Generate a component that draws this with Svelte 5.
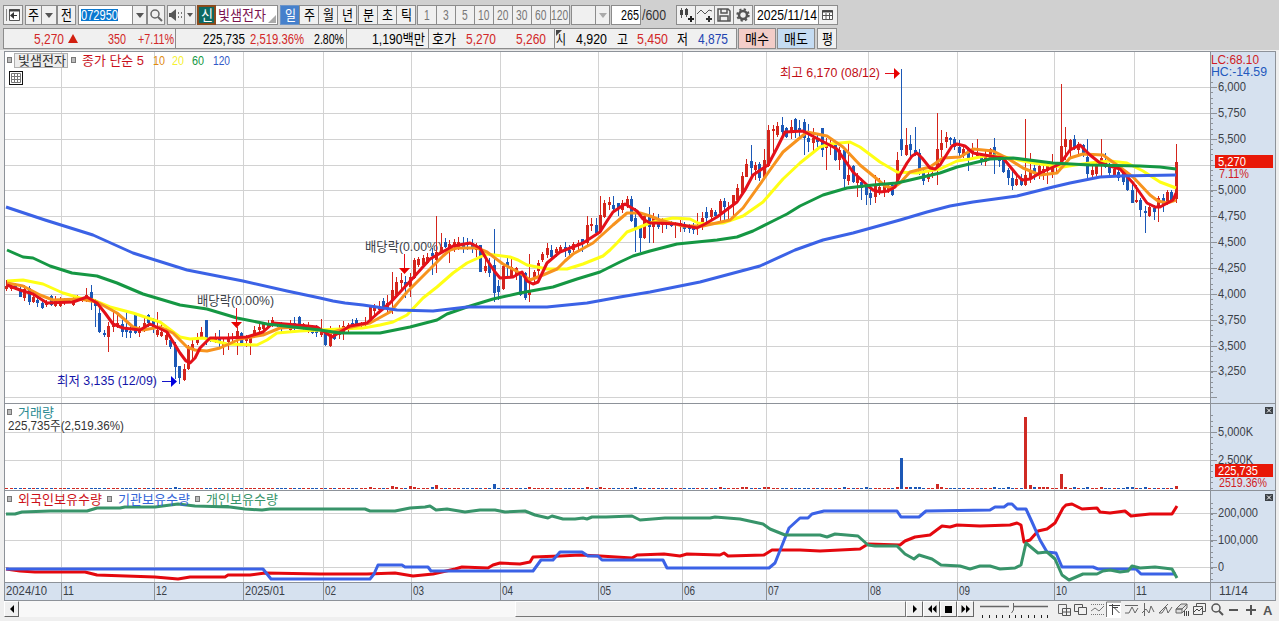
<!--
  App.svelte - Daily stock chart window
  Quote toolbar, candle chart with moving averages, volume and holdings panes
-->
<script>
  const STEP = 4.43
  const FIRST_X = 6.4

  // Candle runs: colour, high, body top, body bottom, low (1/3 px below base)
  const runs = [
    {
      base: 220,
      rows: `r180,198,208,212 r190,198,208,214 b190,192,208,210 b200,208,230,230 r195,208,235,242 b197,205,245,255
        r222,232,245,250 b232,240,250,262 b240,248,265,267 r240,250,256,262 b225,228,255,258 r228,238,258,260
        r232,240,258,262 r235,238,248,255 b236,240,245,250 r228,235,255,258 r225,232,240,243 r230,236,242,245
        r205,225,230,245 b195,216,245,270 b238,245,258,320 b265,280,335,340 b330,338,345,350 r305,318,352,395
        r275,312,320,335 r280,310,320,325 b300,312,335,350 b275,325,335,355 b315,332,340,355 b285,286,340,342
        r318,325,340,352 r290,308,320,335 b282,285,310,320 b295,302,322,340 r275,330,345,350 r310,335,348,350
        r325,345,360,375 b350,360,380,388 b365,375,440,478 b438,438,475,492 r433,448,480,482 r375,380,448,450
        r360,372,390,425 r340,350,370,375 r320,335,350,355 b300,300,358,375 b350,355,360,365 r340,355,362,368
        b330,355,370,385 r355,365,378,405 r340,355,365,390 r340,350,358,370 r320,332,350,405 b335,340,370,378
        r345,355,362,380 r345,345,368,405 r318,330,342,350 r312,320,330,340 r305,310,328,330 r300,308,320,322
        r290,300,310,320 b305,308,318,322 b305,310,322,335 b308,315,325,328 r300,312,330,335 b290,310,325,330
        b288,290,325,328 r308,312,325,330 r305,315,330,340 b315,320,340,342 b315,328,340,350 r298,330,345,350
        b330,335,375,378 r318,340,378,380`
    },
    {
      base: 180,
      rows: `b452,460,478,480 r435,445,465,478 r422,438,458,480 r430,435,450,455 b418,428,438,442 b415,420,435,438
        r425,430,436,442 r410,428,436,438 r375,378,425,428 r373,380,392,410 r363,378,390,395 b355,362,380,390
        r345,370,388,403 r275,330,362,403 r290,305,345,350 r280,300,310,330 b288,305,318,355 r280,290,320,350
        r235,240,295,298 r230,238,255,262 r225,235,255,258 r220,232,248,252 b205,220,228,285 r108,215,240,280
        r160,200,215,220 b175,187,200,205 r180,192,208,248 r178,185,200,215 r170,185,205,210 b172,188,205,218
        b175,188,196,210 b178,190,205,220 r188,200,210,230 b195,195,275,275 r225,258,272,278 b235,248,278,290
        b148,255,340,365 b300,318,335,360 r250,258,328,330 b235,245,260,290 r230,262,290,295 r260,265,285,300
        b275,278,345,348 b275,280,355,360 r222,330,345,365 r270,275,292,310 r240,250,272,300 r215,222,240,245
        r188,205,225,235 b195,210,232,235 r200,208,220,230 r195,200,212,215 b185,200,212,230 b195,210,220,235
        r185,193,210,215 r180,190,198,210 b178,178,190,215 r108,135,190,195 r115,132,138,152 b115,135,158,165
        r48,105,155,158 r60,70,110,115 r52,65,75,90 b48,75,88,95 b68,70,85,108 r60,68,90,98
        r48,58,78,85 b48,58,122,125 b85,115,145,215 b140,145,175,215 r105,108,175,178`
    },
    {
      base: 60,
      rows: `b440,465,500,550 r458,470,500,550 b462,478,500,508 r475,488,495,520 b480,488,495,508 b482,485,498,500
        r485,490,496,533 r480,490,498,515 b485,492,508,515 b492,500,508,518 b490,500,510,522 r460,495,503,525
        r455,475,500,510 b442,455,475,488 r445,450,472,478 b450,455,468,478 r418,422,458,492 b415,422,440,492
        r425,440,448,480 r405,405,432,465 r372,385,420,425 r335,348,400,405 r298,312,350,352 b255,303,325,360
        r305,315,330,360 b305,312,355,362 r268,300,355,360 r195,210,318,320 r195,207,212,282 r185,197,225,230
        b170,195,215,225 b200,203,230,235 r180,200,212,238 b175,177,215,235 b180,205,215,235 b178,185,233,285
        b192,235,245,275 r205,235,250,278 b225,238,245,262 b205,205,270,290 r235,255,265,330 r230,250,258,285
        b245,255,300,302 r262,270,300,330 b262,270,358,390 r250,345,362,375 b315,318,365,368 r340,352,370,412
        b355,365,385,420 b375,382,405,435 b385,400,415,435 r345,375,412,428 r355,380,395,405 r360,370,395,410
        r372,380,392,398 b372,375,405,408 r275,300,365,375 b28,237,270,288 r205,255,285,288 b225,252,270,290
        b200,270,280,288 b268,280,335,345 b325,333,362,375 r335,342,358,365 r325,338,348,355 r158,268,330,375
        r210,250,270,290 r215,230,245,265 b230,235,240,255 b232,238,262,270`
    },
    {
      base: 50,
      rows: `b270,290,310,320 r290,298,318,325 b290,300,325,362 r280,298,310,330 r268,310,318,325 b310,315,335,345
        r300,318,335,348 r295,298,325,330 b265,290,318,372 b310,315,332,350 b315,330,365,370 b355,360,385,405
        b360,383,408,420 r370,388,405,408 b372,385,405,408 r208,375,405,408 r308,365,385,400 b345,355,370,390
        r338,348,372,388 r345,358,368,390 r340,345,362,402 r312,345,365,385 r335,342,350,370 r102,288,335,345
        r232,268,290,330 r268,270,300,325 b255,268,295,300 r275,282,300,318 b282,285,310,320 b268,320,372,385
        r345,360,375,388 r340,348,372,378 r268,325,345,382 b310,335,350,355 b340,350,368,378 r348,358,375,378
        b355,365,385,392 b365,370,395,405 b370,380,420,422 b400,420,458,460 r405,450,456,460 b445,450,480,500
        b468,482,488,548 r460,470,498,500 b465,475,485,510 r438,445,472,515 b432,445,465,485 r420,425,460,465
        b420,425,450,455 r282,335,448,460`
    }
  ]

  const candles = runs
    .flatMap(({ base, rows }) =>
      rows.trim().split(/\s+/).map((row) => {
        const [high, top, bottom, low] = row.slice(1).split(',').map((n) => Math.round(base + n / 3))
        return { up: row[0] === 'r', high, top, bottom, low }
      })
    )
    .map((c, i) => ({ ...c, x: Math.round(FIRST_X + i * STEP) }))

  const averages = [
    { color: '#ffff14', points: '7,281 23,280 43,284 63,293 80,298 93,300 110,307 133,313 160,322 180,337 190,339 203,338 227,344 257,345 267,340 277,333 300,331 320,330 340,329 363,328 380,325 393,322 407,315 423,298 437,287 453,273 467,263 487,254 510,257 518,260 527,265 547,269 567,269 583,264 603,256 610,250 617,243 627,232 640,227 650,223 657,221 673,218 690,219 698,223 707,224 723,223 743,216 763,202 783,179 800,163 810,155 820,147 830,144 850,142 860,147 880,162 897,172 917,173 940,169 957,161 970,159 985,156 1000,156 1033,163 1063,167 1075,165 1090,163 1110,161 1127,163 1143,171 1160,182 1176,188' },
    { color: '#f7931e', points: '7,283 23,286 40,295 53,300 80,299 97,302 117,313 133,327 143,330 160,327 173,333 187,347 195,350 207,351 220,348 240,339 263,335 280,328 300,327 320,330 330,333 347,328 370,323 390,312 407,292 427,272 443,256 450,250 457,248 477,248 487,252 503,264 520,273 530,280 543,275 557,269 565,261 573,254 593,243 613,225 627,213 640,213 650,216 660,220 683,226 703,226 730,220 743,208 763,180 770,170 783,152 807,132 827,136 843,147 860,165 877,179 885,186 893,188 900,183 910,172 930,167 943,158 960,157 973,149 983,150 993,151 1007,158 1023,168 1040,175 1057,173 1070,158 1083,154 1103,155 1117,165 1133,177 1150,195 1158,201 1167,203 1176,200' },
    { color: '#e4101a', points: '7,285 20,290 33,294 47,303 73,302 87,297 97,303 105,313 113,324 123,328 140,330 150,324 167,332 180,353 186,361 190,363 195,358 200,348 210,338 227,338 247,337 263,332 273,323 297,325 317,327 332,337 350,326 367,323 378,313 390,303 413,278 430,259 453,246 470,243 480,248 487,260 495,272 500,278 513,277 522,272 527,281 533,284 538,282 547,263 560,252 583,243 600,232 607,221 613,212 625,204 637,211 643,219 650,223 657,223 677,224 697,228 705,224 717,217 737,202 745,190 753,175 768,165 777,148 785,132 803,131 820,140 837,149 853,172 867,185 873,190 880,192 888,191 895,187 900,175 907,163 912,156 917,153 922,158 930,168 935,169 940,165 952,146 957,144 965,146 973,153 990,156 1003,158 1017,175 1022,180 1030,179 1040,173 1060,164 1070,150 1080,145 1090,155 1100,163 1120,169 1133,183 1147,203 1155,207 1160,207 1173,200 1176,193' },
    { color: '#159743', points: '7,250 23,257 33,258 50,266 72,273 97,276 117,283 143,294 180,305 207,309 237,318 267,324 293,327 320,330 340,333 380,333 410,327 437,320 447,314 467,307 493,299 520,293 553,287 577,279 600,272 620,262 633,256 650,251 677,244 717,240 737,237 753,231 773,221 787,214 800,206 823,195 847,188 873,185 897,183 923,177 940,173 957,167 990,159 1013,158 1053,163 1090,165 1140,166 1160,167 1176,169' },
    { color: '#3b62e6', points: '6,207 45,220 93,235 133,253 187,270 243,281 287,291 320,298 333,301 345,303 363,305 397,310 433,311 467,307 547,307 587,303 620,297 650,292 700,282 760,266 795,250 823,240 853,233 900,220 927,212 950,206 973,202 1017,196 1053,187 1070,183 1100,177 1120,176 1176,175' }
  ]

  const holdings = [
    { color: '#e4080e', points: '6,569 20,571 35,572 85,572 97,575 155,577 178,579 190,577 225,577 228,575 250,575 265,573 320,574 367,574 395,573 413,576 433,574 455,569 462,567 488,568 493,565 500,563 520,564 530,562 533,557 560,556 580,555 600,556 632,558 637,555 664,554 680,556 687,554 720,555 724,553 728,556 764,555 772,550 800,550 820,551 860,549 868,544 900,545 905,541 915,537 930,535 942,526 950,527 957,525 980,526 1010,525 1017,523 1021,525 1024,542 1030,540 1038,531 1047,529 1055,523 1063,508 1066,505 1072,504 1082,509 1097,508 1100,512 1110,513 1125,511 1131,516 1150,514 1172,514 1177,506' },
    { color: '#3b62e6', points: '6,569 263,569 271,579 370,579 374,574 378,565 402,565 405,567 428,567 431,571 533,571 541,560 553,560 560,552 582,552 588,556 598,556 602,560 663,560 667,568 769,568 775,563 789,528 800,518 808,518 812,514 824,511 897,511 901,517 919,517 926,511 990,510 995,507 1004,507 1008,504 1012,504 1017,509 1026,509 1032,522 1040,540 1047,552 1056,553 1062,567 1093,567 1098,569 1136,569 1141,574 1176,574' },
    { color: '#38946a', points: '6,514 15,514 22,512 50,511 87,511 97,508 120,508 125,507 155,507 178,504 195,506 230,507 245,509 262,510 270,509 365,509 370,511 395,511 410,508 425,507 430,506 436,510 447,509 465,512 480,510 495,510 505,512 525,511 535,515 548,518 552,516 563,519 575,519 583,518 587,519 592,517 606,517 632,516 640,520 665,518 710,518 715,517 740,519 763,524 770,529 785,535 820,535 827,537 835,534 858,536 868,545 875,546 897,546 905,554 914,559 919,555 932,559 941,565 960,566 970,569 980,566 990,566 1000,569 1015,568 1021,565 1026,543 1038,553 1047,552 1055,559 1062,575 1069,580 1083,574 1097,574 1103,571 1110,570 1120,572 1128,571 1132,566 1140,568 1155,567 1172,569 1177,578' }
  ]

  // Bar heights in px by x; every other day is a flat dash
  const volumes = {
    174: 2, 369: 2, 391: 3, 396: 2, 409: 3, 413: 2, 432: 2, 436: 4, 493: 5, 529: 2, 586: 2, 600: 2, 635: 2, 719: 2,
    742: 2, 746: 2, 764: 2, 768: 2, 843: 2, 866: 2, 897: 2, 901: 31, 906: 2, 910: 2, 915: 2, 919: 2, 936: 5, 941: 2,
    994: 2, 1007: 2, 1025: 72, 1030: 4, 1034: 2, 1038: 2, 1043: 2, 1047: 2, 1061: 15, 1065: 2, 1074: 2, 1087: 2,
    1100: 2, 1127: 2, 1131: 2, 1145: 2, 1176: 3
  }
  const bars = candles.map((c) => ({ x: c.x, up: c.up, h: 1 }))
  for (const [x, h] of Object.entries(volumes)) {
    const i = Math.round((Number(x) - FIRST_X) / STEP)
    bars[i].h = h
  }

  const months = [
    [61, '11'], [154, '12'], [243, '2025/01'], [323, '02'], [411, '03'], [500, '04'], [598, '05'],
    [682, '06'], [766, '07'], [868, '08'], [957, '09'], [1054, '10'], [1134, '11']
  ]
  const prices = ['6,000', '5,750', '5,500', '', '5,000', '4,750', '4,500', '4,250', '4,000', '3,750', '3,500', '3,250', '']
    .map((text, i) => ({ text, y: Math.round(87 + i * 25.85) }))
  const volumeGrid = [[432, '5,000K', 35], [460, '2,500K', 35]]
  const holdingGrid = [[513, '200,000', 40], [540, '100,000', 40], [567, '0', 6]]

  const priceTicks = Array.from({ length: 62 }, (_, i) => Math.round(82 + i * 5.17))
  const volumeTicks = Array.from({ length: 14 }, (_, i) => Math.round(415 + i * 5.6))
  const holdingTicks = Array.from({ length: 15 }, (_, i) => Math.round(503 + i * 5.4))

  const periods = ['일', '주', '월', '년']
  const units = ['분', '초', '틱']
  const minutes = ['1', '3', '5', '10', '20', '30', '60', '120']
</script>

{#snippet txt(text, width, color = '#000', size = 14)}
  <svg class="txt" {width} height="18">
    <text x="0" y="14" textLength={width} lengthAdjust="spacingAndGlyphs" fill={color} font-size={size}>{text}</text>
  </svg>
{/snippet}

{#snippet label(text, x, y, width, color = '#3a4047', size = 13)}
  <text {x} {y} textLength={width} lengthAdjust="spacingAndGlyphs" fill={color} font-size={size}>{text}</text>
{/snippet}

{#snippet handle(x, y)}
  <rect x={x + 0.5} y={y + 0.5} width="4" height="5" fill="#bbb" stroke="#777" />
{/snippet}

{#snippet close(y)}
  <rect x="1265" {y} width="8" height="7" fill="#3c4147" />
  <path d="M1267 {y + 1.5}l4 4m0-4l-4 4" stroke="#fff" />
{/snippet}

<div class="window">
  <div class="bar tools">
    <span class="box" style:width="20px">
      <svg width="16" height="16"><path d="M4.5 2.5h10v11h-10z" fill="#fff" stroke="#555" /><path d="M4 3.500h11" stroke="#444" stroke-width="2" /><path d="M1.500 2v12" stroke="#888" /><path d="M9 5v7L5 8.500z" fill="#333" /><path d="M9 8.500h3" stroke="#333" /></svg>
    </span>
    <span class="box" style:width="17px" style:margin-left="2px">{@render txt('주', 11)}</span>
    <span class="box join" style:width="16px"><i class="down"></i></span>
    <span class="box" style:width="19px">{@render txt('전', 11)}</span>
    <span class="box white code" style:width="55px"><b>{@render txt('072950', 37, '#fff')}</b></span>
    <span class="box join" style:width="15px"><i class="down"></i></span>
    <span class="box" style:width="18px">
      <svg width="14" height="14"><circle cx="6" cy="6" r="4" fill="none" stroke="#666" stroke-width="1.500" /><path d="M9 9l4 4" stroke="#666" stroke-width="2" /></svg>
    </span>
    <span class="box" style:width="18px" style:margin-left="2px">
      <svg width="16" height="14"><path d="M1 5h2l5-4v12l-5-4H1z" fill="#555" /><path d="M10.500 4v6M13.500 4v6" stroke="#777" stroke-dasharray="2 2" /></svg>
    </span>
    <span class="box join" style:width="12px"><i class="down small"></i></span>
    <span class="badge">{@render txt('신', 12, '#fff')}</span>
    <span class="box white name" style:width="62px">{@render txt('빛샘전자', 48, '#7b1450')}<i class="corner"></i></span>
    <span class="group" style:margin-left="2px">
      {#each periods as period, i}
        <span class="box join" class:on={i === 0} style:width="20px">{@render txt(period, 11, i === 0 ? '#fff' : '#000')}</span>
      {/each}
    </span>
    <span class="group" style:margin-left="1px">
      {#each units as unit}
        <span class="box join" style:width="20px">{@render txt(unit, 11)}</span>
      {/each}
    </span>
    <span class="group" style:margin-left="1px">
      {#each minutes as minute}
        <span class="box join" style:width="20px">{@render txt(minute, minute.length * 5.7, '#777')}</span>
      {/each}
    </span>
    <span class="box" style:width="25px" style:margin-left="1px"></span>
    <span class="box join" style:width="15px"><i class="down pale"></i></span>
    <span class="box white right" style:width="30px" style:margin-left="1px">{@render txt('265', 18)}</span>
    <span class="total">{@render txt('/600', 24, '#333')}</span>
    <span class="group" style:margin-left="10px">
      <span class="box join" style:width="20px">
        <svg width="18" height="16"><path d="M4.500 1v10M9.500 1v9" stroke="#555" /><path d="M3 3h3v5H3zM8 2h3v6H8z" fill="#444" /><path d="M14 9v6M11 12h6" stroke="#222" stroke-width="2" /></svg>
      </span>
      <span class="box join" style:width="20px">
        <svg width="18" height="16"><path d="M1 7l4-4 4 4 4-4 3 1" fill="none" stroke="#555" /><path d="M13 9v6M10 12h6" stroke="#333" stroke-width="2" /></svg>
      </span>
      <span class="box join" style:width="20px">
        <svg width="16" height="16"><path d="M2 2h10l2 2v10H2zM5 2v4h6V2M4 14V9h8v5" fill="none" stroke="#555" stroke-width="1.500" /></svg>
      </span>
      <span class="box join" style:width="20px">
        <svg width="16" height="16"><circle cx="8" cy="8" r="4" fill="none" stroke="#555" stroke-width="2.500" /><circle cx="8" cy="8" r="5.700" fill="none" stroke="#555" stroke-width="2" stroke-dasharray="2.200 2.280" /></svg>
      </span>
    </span>
    <span class="box white" style:width="65px" style:margin-left="1px">{@render txt('2025/11/14', 60)}</span>
    <span class="box join" style:width="20px">
      <svg width="14" height="12"><path d="M1.500 1.500h10v9h-10zM1.500 6.500h10M5 4v6M8.500 4v6" fill="#fff" stroke="#555" /><path d="M1 2.500h11" stroke="#444" stroke-width="2" /></svg>
    </span>
  </div>

  <div class="bar quote">
    <span class="cell" style:width="172px">
      <span style:margin-left="30px">{@render txt('5,270', 30, '#d22828')}</span>
      <i class="up"></i>
      <span style:margin-left="30px">{@render txt('350', 18, '#d22828')}</span>
      <span style:margin-left="12px">{@render txt('+7.11%', 36, '#d22828')}</span>
    </span>
    <span class="cell" style:width="171px">
      <span style:margin-left="27px">{@render txt('225,735', 42)}</span>
      <span style:margin-left="5px">{@render txt('2,519.36%', 54, '#d22828')}</span>
      <span style:margin-left="10px">{@render txt('2.80%', 30)}</span>
    </span>
    <span class="cell" style:width="82px"><span style:margin-left="25px">{@render txt('1,190백만', 53)}</span></span>
    <span class="cell" style:width="126px">
      <span style:margin-left="3px">{@render txt('호가', 24)}</span>
      <span style:margin-left="10px">{@render txt('5,270', 30, '#d22828')}</span>
      <span style:margin-left="20px">{@render txt('5,260', 30, '#d22828')}</span>
    </span>
    <span class="cell mark" style:width="183px">
      <span style:margin-left="1px">{@render txt('시', 10)}</span>
      <span style:margin-left="10px">{@render txt('4,920', 31)}</span>
      <span style:margin-left="10px">{@render txt('고', 11)}</span>
      <span style:margin-left="9px">{@render txt('5,450', 31, '#d22828')}</span>
      <span style:margin-left="9px">{@render txt('저', 11)}</span>
      <span style:margin-left="10px">{@render txt('4,875', 30, '#2244b0')}</span>
    </span>
    <span class="box buy">{@render txt('매수', 24)}</span>
    <span class="box sell">{@render txt('매도', 24)}</span>
    <span class="box" style:width="20px" style:margin-left="2px">{@render txt('평', 11)}</span>
  </div>

  <svg class="chart" width="1279" height="551" viewBox="0 50 1279 551">
    <rect x="4" y="51" width="1206" height="531" fill="#fff" />
    <rect x="1210" y="51" width="66" height="550" fill="#d6e1ef" />
    <rect x="4" y="582" width="1272" height="19" fill="#d6e1ef" />

    <g class="grid">
      {#each months as [x]}
        <path d="M{x + 0.5} 52V582" />
      {/each}
      {#each prices as { y }}
        <path d="M4 {y + 0.5}H1210" />
      {/each}
      {#each [...volumeGrid, ...holdingGrid] as [y]}
        <path d="M4 {y + 0.5}H1210" />
      {/each}
    </g>

    {@render label('배당락(0.00%)', 197, 305, 77)}
    {@render label('배당락(0.00%)', 365, 251, 77)}

    <g shape-rendering="crispEdges">
      {#each candles as c}
        <g fill={c.up ? '#d4251c' : '#1c58b6'}>
          <rect x={c.x} y={c.high} width="1" height={c.low - c.high} />
          <rect x={c.x - 1} y={c.top} width="3" height={Math.max(c.bottom - c.top, 2)} />
        </g>
      {/each}
      {#each bars as bar}
        <rect x={bar.x - 1} y={489 - bar.h} width="3" height={bar.h} fill={bar.up ? '#cf2a24' : '#1c58b6'} />
      {/each}
    </g>

    <g class="lines">
      {#each averages as line}
        <polyline points={line.points} stroke={line.color} />
      {/each}
      {#each holdings as line}
        <polyline points={line.points} stroke={line.color} />
      {/each}
    </g>

    <!-- Pane frames and axis -->
    <g class="frame">
      <path d="M4 51.500H1276M4 403.500H1276M4 490.500H1276M4 582.500H1276M4 600.500H1276M4.500 51V601M1210.500 51V601M1275.500 51V601" />
      {#each months as [x]}
        <path d="M{x + 0.5} 583V600" />
      {/each}
      {#each prices as { y }}
        <path d="M1211 {y + 0.5}h6" />
      {/each}
      {#each [...volumeGrid, ...holdingGrid] as [y]}
        <path d="M1211 {y + 0.5}h6" />
      {/each}
      {#each [...priceTicks, ...volumeTicks, ...holdingTicks] as y}
        <path d="M1211 {y + 0.5}h2" />
      {/each}
    </g>

    {#each prices as { text, y }}
      {#if text}{@render label(text, 1218, y + 4, 28)}{/if}
    {/each}
    {#each [...volumeGrid, ...holdingGrid] as [y, text, w]}
      {@render label(text, 1218, y + 4, w)}
    {/each}
    {@render label('LC:68.10', 1211, 64, 48, '#d01c24')}
    {@render label('HC:-14.59', 1211, 76, 56, '#2358bd')}
    <rect x="1215" y="155" width="58" height="13" fill="#e81808" />
    {@render label('5,270', 1218, 166, 28, '#fff')}
    {@render label('7.11%', 1219, 178, 30, '#d01c24')}
    <rect x="1215" y="464" width="58" height="13" fill="#e81808" />
    {@render label('225,735', 1218, 475, 40, '#fff')}
    {@render label('2519.36%', 1219, 487, 48, '#d01c24')}
    {@render close(407)}
    {@render close(494)}

    {@render label('2024/10', 6, 595, 41)}
    {#each months as [x, text]}
      {@render label(text, x + 2, 595, text.length > 2 ? 40 : 11)}
    {/each}
    {@render label('11/14', 1219, 595, 29)}

    <!-- Legends -->
    {@render handle(7, 57)}
    <rect x="14.500" y="53.500" width="53" height="14" fill="#ececec" stroke="#b0b0b0" />
    {@render label('빛샘전자', 18, 65, 48, '#333')}
    {@render handle(71, 57)}
    {@render label('종가 단순 5', 82, 65, 62, '#c8101c')}
    {@render label('10', 153, 65, 12, '#e08a10')}
    {@render label('20', 172, 65, 12, '#f5f032')}
    {@render label('60', 192, 65, 12, '#159743')}
    {@render label('120', 213, 65, 17, '#3058c8')}
    <rect x="9.500" y="71.500" width="13" height="13" fill="#fff" stroke="#111" />
    <path d="M11.500 73.500h9v9h-9zM11.500 76.500h9M11.500 79.500h9M14.500 73.500v9M17.500 73.500v9" fill="none" stroke="#777" />
    {@render handle(7, 409)}
    {@render label('거래량', 18, 417, 36, '#2b8a92')}
    {@render label('225,735주(2,519.36%)', 8, 430, 116, '#333')}
    {@render handle(7, 496)}
    {@render label('외국인보유수량', 18, 504, 84, '#cc1018')}
    {@render handle(107, 496)}
    {@render label('기관보유수량', 118, 504, 72, '#3565d8')}
    {@render handle(195, 496)}
    {@render label('개인보유수량', 206, 504, 72, '#38946a')}

    <!-- Markers -->
    {@render label('최고 6,170 (08/12)', 780, 77, 100, '#c00c14')}
    <path d="M885 73.500h10" stroke="#e4101a" />
    <path d="M894 68v11l6-5.500z" fill="#e80000" />
    {@render label('최저 3,135 (12/09)', 57, 385, 100, '#1414a8')}
    <path d="M162 381.500h10" stroke="#1414c8" />
    <path d="M171 376v11l6-5.500z" fill="#0000e0" />
    <path d="M236.500 308v15M404.500 254v15" stroke="#e4101a" />
    <path d="M231 322h11l-5.500 6zM399 268h11l-5.500 6z" fill="#e80000" />
  </svg>

  <div class="bottom">
    <span class="btn first"><svg width="6" height="8"><path d="M5 0v8L1 4z" /></svg></span>
    <span class="track"></span>
    <span class="thumb"></span>
    <span class="btn"><svg width="6" height="8"><path d="M1 0v8l4-4z" /></svg></span>
    <span class="btn"><svg width="10" height="8"><path d="M5 0v8L1 4zM9.500 0v8l-4-4z" /></svg></span>
    <span class="btn"><svg width="7" height="7"><path d="M0 0h7v7H0z" /></svg></span>
    <span class="btn"><svg width="10" height="8"><path d="M.500 0v8l4-4zM5 0v8l4-4z" /></svg></span>
    <svg class="icons" width="300" height="17" viewBox="978 601 300 17">
      <path d="M980 606.500H1009M1014 606.500H1048" stroke="#666" stroke-width="1.500" />
      <path d="M1013.500 603v7l-2 3" stroke="#666" />
      <path d="M982.500 615v3M989.500 615v3M996.500 615v3M1002.500 615v3M1009.500 615v3M1015.500 615v3M1021.500 615v3M1028.500 615v3M1034.500 615v3M1041.500 615v3M1047.500 615v3" stroke="#222" />
      <path d="M1058.500 604.500h8v9h-8z" stroke="#666" /><path d="M1062.500 608.500h8v7h-8zM1066.500 608.500v7M1062.500 612h8" fill="#f0f0f0" stroke="#555" />
      <path d="M1074.500 604.500h8v7h-8z" fill="none" stroke="#555" /><path d="M1078.500 607.500h8v7h-8z" fill="#f0f0f0" stroke="#555" />
      <path d="M1091 604.500h13M1091 614.500h13" stroke="#777" stroke-dasharray="1 1" /><path d="M1091 611l4-3 4 3 5-5" stroke="#777" />
      <path d="M1106 602h15v16h-15z" fill="#fff" /><path d="M1106.500 617v-15H1121" stroke="#777" /><path d="M1109 605.500h11M1112.500 604v11M1113.500 607l6 6M1113 607.500h5" stroke="#444" />
      <path d="M1125 605.500h13M1125 613h4l3-6 3 6 3-5" stroke="#666" />
      <path d="M1144.500 603v13M1142 613l4-4 3 4 2-7 3 6" stroke="#666" />
      <path d="M1159 613l9-9M1159 613h3l4-6 2 6 4-6" stroke="#666" />
      <path d="M1176 609l5-5h6l-5 5zM1176 609h6v4h-6zM1182 613l5-5v-4" fill="#ddd" stroke="#666" /><path d="M1184.500 611v5M1186.500 611v5M1188.500 611v5" stroke="#444" />
      <path d="M1196.500 603.500h9v8h-9z" stroke="#555" /><path d="M1193.500 606.500h9v8h-9z" fill="#f0f0f0" stroke="#555" /><path d="M1194 612l3-3 2 2 3-3" stroke="#444" />
      <circle cx="1216" cy="608" r="4" fill="none" stroke="#555" stroke-width="1.500" /><path d="M1219 611l4 4" stroke="#555" stroke-width="2" />
      <path d="M1229 610h9M1246 610h10M1251 605v10" stroke="#555" stroke-width="2" />
      <text x="1263" y="615" font-size="13" font-weight="700" fill="#555">A</text>
    </svg>
  </div>
</div>

<style>
  :global(body) {
    background: #ececec;
    overflow: hidden;
  }

  .window {
    width: 1279px;
    height: 621px;
    background: #efefef;
    font-family: 'Liberation Sans', 'Noto Sans CJK KR', sans-serif;
    overflow: hidden;
  }

  svg {
    display: block;
    flex: none;
  }

  .txt {
    overflow: visible;
  }

  .bar {
    display: flex;
    align-items: stretch;
    box-sizing: border-box;
    padding-left: 3px;
    background: #d0d0d0;
  }

  .tools {
    height: 27px;
    padding-top: 5px;
    padding-bottom: 2px;
  }

  .quote {
    height: 23px;
    padding-top: 1px;
    padding-bottom: 1px;
  }

  .box,
  .cell {
    position: relative;
    display: flex;
    align-items: center;
    justify-content: center;
    box-sizing: border-box;
    flex: none;
    background: #f0f0f0;
    border: 1px solid #8c8c8c;
  }

  .cell {
    justify-content: flex-start;
    border-right-width: 0;
  }

  .cell.mark {
    border-right-width: 1px;
  }

  .cell.mark::before {
    content: '';
    position: absolute;
    left: 1px;
    top: 1px;
    border: 3px solid transparent;
    border-top-color: #444;
    border-left-color: #444;
  }

  .group {
    display: flex;
  }

  .join {
    margin-left: -1px;
  }

  .group .join:first-child {
    margin-left: 0;
  }

  .white {
    background: #fff;
  }

  .right {
    justify-content: flex-end;
    padding-right: 1px;
  }

  .on {
    background: #4580cc;
    border-color: #6d95c8;
  }

  .code {
    justify-content: flex-start;
    margin-left: 2px;
    padding-left: 2px;
  }

  .code b {
    height: 12px;
    background: #0a78d0;
    display: flex;
    align-items: center;
    font-weight: 400;
  }

  .badge {
    display: flex;
    align-items: center;
    justify-content: center;
    box-sizing: border-box;
    width: 19px;
    margin-left: 1px;
    background: #0c6a62;
    border: 2px solid #8a4a1c;
  }

  .name {
    justify-content: flex-start;
    padding-left: 2px;
    border-left: 0;
  }

  .corner {
    position: absolute;
    right: 1px;
    bottom: 1px;
    border: 4px solid transparent;
    border-right-color: #aaa;
    border-bottom-color: #aaa;
  }

  .down {
    border: 4px solid transparent;
    border-top: 5px solid #555;
    border-bottom: 0;
  }

  .down.small {
    border-width: 3px;
    border-top-width: 4px;
    border-bottom: 0;
  }

  .down.pale {
    border-top-color: #aaa;
  }

  .up {
    margin-left: 4px;
    border: 5px solid transparent;
    border-bottom: 9px solid #d22010;
    border-top: 0;
  }

  .total {
    display: flex;
    align-items: center;
    margin-left: 1px;
  }

  .buy,
  .sell {
    width: 38px;
    margin-left: 1px;
    background: #f3cdc8;
  }

  .sell {
    background: #c5dcf3;
  }

  .grid path {
    stroke: #d2d2d2;
  }

  .lines polyline {
    fill: none;
    stroke-width: 3;
    stroke-linejoin: round;
  }

  .frame path {
    stroke: #8d9299;
  }

  .bottom {
    display: flex;
    height: 16px;
    padding-left: 4px;
  }

  .track {
    width: 496px;
    background: #f8f8f8;
  }

  .thumb {
    box-sizing: border-box;
    width: 391px;
    border: 1px solid #fff;
    border-bottom: 1px solid #777;
    border-right-color: #777;
    background: #efefef;
  }

  .btn {
    display: flex;
    align-items: center;
    justify-content: center;
    box-sizing: border-box;
    width: 17px;
    background: #f0f0f0;
    border: 1px solid #fff;
    border-right-color: #666;
    border-bottom-color: #666;
  }

  .first {
    width: 15px;
  }

  .icons {
    margin-left: 4px;
    fill: none;
  }
</style>
